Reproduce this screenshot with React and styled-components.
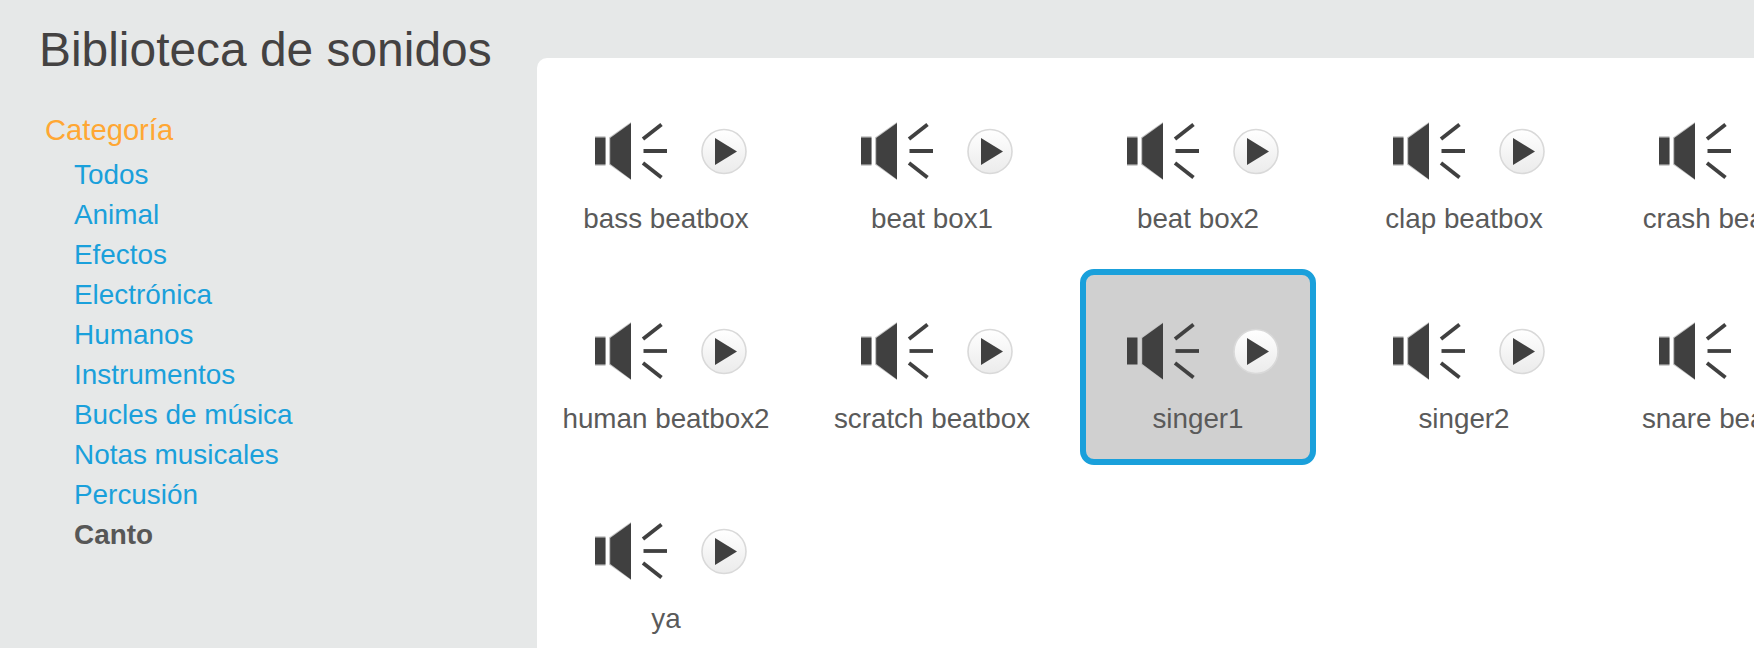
import styled, { createGlobalStyle } from "styled-components";

const CATEGORIES = [
  "Todos",
  "Animal",
  "Efectos",
  "Electrónica",
  "Humanos",
  "Instrumentos",
  "Bucles de música",
  "Notas musicales",
  "Percusión",
  "Canto",
];

const SOUNDS = [
  "bass beatbox",
  "beat box1",
  "beat box2",
  "clap beatbox",
  "crash beatbox",
  "human beatbox2",
  "scratch beatbox",
  "singer1",
  "singer2",
  "snare beatbox",
  "ya",
];

function SpeakerIcon() {
  return (
    <SpeakerSvg viewBox="0 0 72 58" width="72" height="58">
      <rect x="0" y="14" width="10.5" height="30" fill="#cfcfcf" />
      <rect x="0" y="15.5" width="10.5" height="27" fill="#404040" />
      <polygon points="14,15.5 36,0 36,58 14,42.5" fill="#c4c4c4" />
      <polygon points="15.2,16 36,1 36,57.5 15.2,42" fill="#404040" />
      <g stroke="#404040" strokeWidth="3.8">
        <line x1="48" y1="17" x2="66.5" y2="2.5" />
        <line x1="48.5" y1="29" x2="72" y2="29" />
        <line x1="48" y1="41" x2="66.5" y2="55.5" />
      </g>
    </SpeakerSvg>
  );
}

function PlayButton() {
  return (
    <svg viewBox="0 0 46 47" width="46" height="47">
      <defs>
        <linearGradient id="playFill" x1="0" y1="0" x2="0" y2="1">
          <stop offset="0" stopColor="#ffffff" />
          <stop offset="1" stopColor="#ebebeb" />
        </linearGradient>
      </defs>
      <circle cx="23" cy="23.5" r="22" fill="url(#playFill)" stroke="#d9d9d9" strokeWidth="1.6" />
      <polygon points="14,10 36,23.5 14,37" fill="#404040" />
    </svg>
  );
}

export default function App() {
  return (
    <>
      <GlobalStyle />
      <Page>
        <Sidebar>
          <Title>Biblioteca de sonidos</Title>
          <CategoryHeading>Categoría</CategoryHeading>
          <CategoryList>
            {CATEGORIES.map((name) => (
              <CategoryItem key={name} $active={name === "Canto"}>
                {name}
              </CategoryItem>
            ))}
          </CategoryList>
        </Sidebar>
        <Panel>
          <SoundGrid>
            {SOUNDS.map((name) => (
              <SoundTile key={name} $selected={name === "singer1"}>
                <IconRow>
                  <SpeakerIcon />
                  <PlayButton />
                </IconRow>
                <SoundName>{name}</SoundName>
              </SoundTile>
            ))}
          </SoundGrid>
        </Panel>
      </Page>
    </>
  );
}

const GlobalStyle = createGlobalStyle`
  html, body {
    margin: 0;
    height: 100%;
    overflow: hidden;
    background: #e6e8e8;
    font-family: "Liberation Sans", Arial, sans-serif;
  }
`;

const Page = styled.div`
  width: 1754px;
  height: 648px;
  display: flex;
  overflow: hidden;
`;

const Sidebar = styled.div`
  width: 537px;
  flex-shrink: 0;
  padding: 24px 0 0 39px;
  box-sizing: border-box;
`;

const Title = styled.h1`
  margin: 0;
  font-size: 47.9px;
  font-weight: 400;
  line-height: 52px;
  color: #444242;
  white-space: nowrap;
`;

const CategoryHeading = styled.div`
  margin: 34px 0 0 6px;
  font-size: 29.2px;
  line-height: 40px;
  color: #ffa733;
`;

const CategoryList = styled.ul`
  list-style: none;
  margin: 5px 0 0 35px;
  padding: 0;
`;

const CategoryItem = styled.li`
  font-size: 27.9px;
  line-height: 40px;
  font-weight: ${(p) => (p.$active ? 700 : 400)};
  color: ${(p) => (p.$active ? "#575757" : "#1aa0db")};
  white-space: nowrap;
`;

const Panel = styled.div`
  flex: 1;
  min-width: 0;
  margin-top: 58px;
  padding: 11px;
  background: #ffffff;
  border-top-left-radius: 10px;
  overflow: hidden;
`;

const SoundGrid = styled.div`
  display: grid;
  grid-template-columns: repeat(5, 236px);
  grid-auto-rows: 196px;
  column-gap: 30px;
  row-gap: 4px;
`;

const SoundTile = styled.div`
  box-sizing: border-box;
  padding-top: 47px;
  border: 6px solid ${(p) => (p.$selected ? "#1aa0db" : "transparent")};
  border-radius: 14px;
  background: ${(p) => (p.$selected ? "#d0d0d0" : "transparent")};
  display: flex;
  flex-direction: column;
  align-items: center;
`;

const IconRow = styled.div`
  display: flex;
  align-items: center;
  gap: 34px;
  padding-left: 10px;
  height: 58px;
`;

const SpeakerSvg = styled.svg`
  display: block;
`;

const SoundName = styled.div`
  margin-top: 24px;
  font-size: 27.8px;
  line-height: 30px;
  color: #5a5a5a;
  white-space: nowrap;
`;
